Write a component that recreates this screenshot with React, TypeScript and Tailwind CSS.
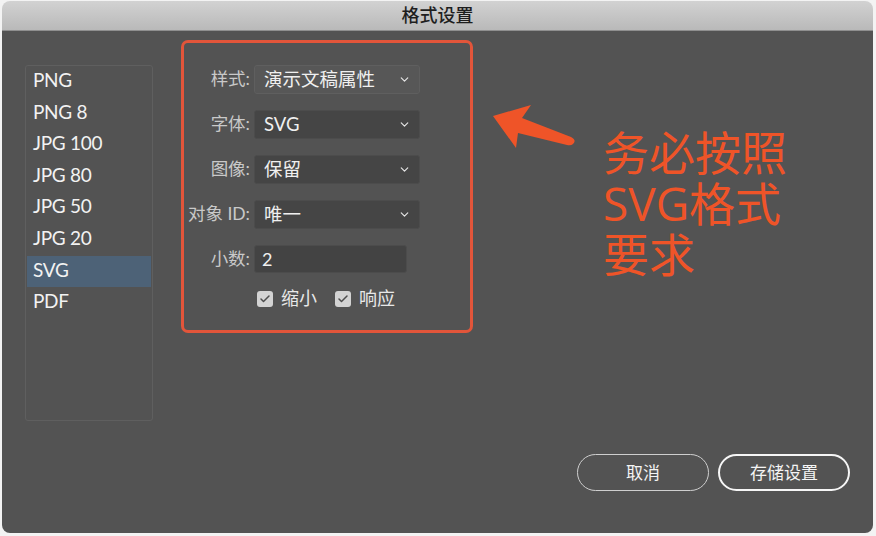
import { ChevronDown, Check } from "lucide-react";

const FORMATS = ["PNG", "PNG 8", "JPG 100", "JPG 80", "JPG 50", "JPG 20", "SVG", "PDF"];

const UI_FONT = "font-['Lato','Noto_Sans_CJK_SC',sans-serif]";

function Select({ value, light }: { value: string; light?: boolean }) {
  return (
    <div
      className={`flex h-[29px] w-[166px] items-center justify-between rounded-[3px] border pl-[9px] pr-[8px] text-[18.5px] text-[#f0f0f0] ${
        light ? "border-[#5f5f5f] bg-[#575757]" : "border-[#4c4c4c] bg-[#454545]"
      }`}
    >
      <span className="leading-none">{value}</span>
      <ChevronDown className="h-[13px] w-[13px] text-[#e4e4e4]" strokeWidth={2.2} />
    </div>
  );
}

function Row({ label, children }: { label: string; children: React.ReactNode }) {
  return (
    <div className="flex items-center">
      <span className="w-[70px] shrink-0 pr-[4px] text-right text-[17.5px] whitespace-nowrap text-[#c9c9c9]">
        {label}
      </span>
      {children}
    </div>
  );
}

function CheckBox({ label }: { label: string }) {
  return (
    <div className="flex items-center gap-[8px]">
      <span className="flex h-[16px] w-[16px] items-center justify-center rounded-[3px] bg-[#d3d3d3]">
        <Check className="h-[12px] w-[12px] text-[#4d4d4d]" strokeWidth={3} />
      </span>
      <span className="text-[18px] text-[#e8e8e8]">{label}</span>
    </div>
  );
}

export default function App() {
  return (
    <div className={`relative h-[536px] w-[876px] bg-[#f3f3f3] pt-[1px] pl-[2px] ${UI_FONT}`}>
      <div className="flex h-[532px] w-[871px] flex-col overflow-hidden rounded-[8px]">
        {/* title bar */}
        <div className="flex h-[30px] shrink-0 items-center justify-center border-b border-[#8f8f8f] bg-gradient-to-b from-[#d2d2d2] to-[#b9b9b9] text-[18px] font-medium text-[#1e1e1e]">
          格式设置
        </div>

        <div className="flex flex-1 flex-col bg-[#535353]">
          <div className="flex items-start">
            {/* format list */}
            <div className="mt-[34px] ml-[23px] h-[356px] w-[128px] rounded-[3px] border border-[#5f5f5f]">
              {FORMATS.map((f) => (
                <div
                  key={f}
                  className={`mx-[1px] flex h-[31.6px] items-center pb-[3px] pl-[6px] text-[19px] tracking-[-0.3px] text-[#f2f2f2] ${
                    f === "SVG" ? "bg-[#4d6277]" : ""
                  }`}
                >
                  {f}
                </div>
              ))}
            </div>

            {/* options panel, outlined */}
            <div className="mt-[9px] ml-[28px] flex h-[293px] w-[292px] flex-col gap-[16px] rounded-[7px] border-[3px] border-[#e2553a] pt-[22px]">
              <Row label="样式:">
                <Select value="演示文稿属性" light />
              </Row>
              <Row label="字体:">
                <Select value="SVG" />
              </Row>
              <Row label="图像:">
                <Select value="保留" />
              </Row>
              <Row label="对象 ID:">
                <Select value="唯一" />
              </Row>
              <Row label="小数:">
                <div className="flex h-[28px] w-[153px] items-center rounded-[3px] border border-[#4c4c4c] bg-[#434343] pl-[7px] text-[18px] text-[#f0f0f0]">
                  2
                </div>
              </Row>
              <div className="-mt-[4px] flex gap-[18px] pl-[73px]">
                <CheckBox label="缩小" />
                <CheckBox label="响应" />
              </div>
            </div>
          </div>

          {/* dialog buttons */}
          <div className="mt-[33px] flex justify-end gap-[9px] pr-[23px]">
            <button className="h-[37px] w-[132px] rounded-full border-[1.5px] border-[#cfcfcf] text-[17px] text-[#f4f4f4]">
              取消
            </button>
            <button className="h-[37px] w-[132px] rounded-full border-[2.5px] border-[#f6f6f6] text-[17px] text-[#f4f4f4]">
              存储设置
            </button>
          </div>
        </div>
      </div>

      {/* callout arrow */}
      <svg className="absolute top-0 left-0" width="876" height="536" viewBox="0 0 876 536">
        <path
          d="M493 116 L531 105 L522 118 L571 137 Q577 140 573 144 Q571 146 567 145 L518 133 L516 148 Z"
          fill="#ef5428"
        />
      </svg>

      {/* callout note */}
      <div className="absolute top-[127px] left-[603px] font-['Open_Sans','Noto_Sans_CJK_SC',sans-serif] text-[46px] leading-[51px] text-[#ef5428]">
        <div className="h-[51px]">务必按照</div>
        <div className="h-[51px]">SVG格式</div>
        <div className="h-[51px]">要求</div>
      </div>
    </div>
  );
}
